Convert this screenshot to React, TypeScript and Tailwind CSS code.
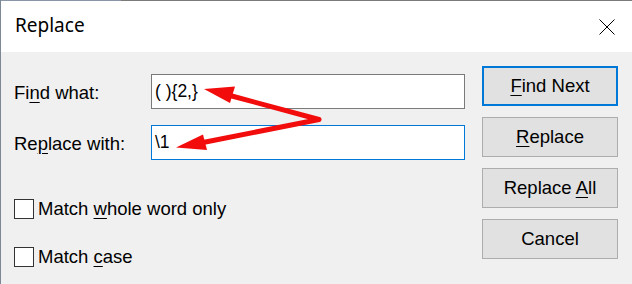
export default function App() {
  return (
    <div className="relative w-[632px] h-[284px] overflow-hidden bg-[#f0f0f0] font-['Liberation_Sans',Arial,sans-serif] text-black">
      <div className="flex h-full flex-col border-l border-[#7d8896]">
        <div className="flex h-px">
          <div className="w-[120px] bg-[#8a97a8]" />
          <div className="flex-1 bg-[#7a7a7a]" />
        </div>
        <div className="flex h-[51px] items-center justify-between bg-white pl-[14px] pr-[17px]">
          <span className="font-['Noto_Sans',sans-serif] text-[19px] leading-none text-black pb-[2px]">Replace</span>
          <svg width="16" height="16" viewBox="0 0 16 16" className="mt-[1px]">
            <path d="M0.5 0.5 L15.5 15.5 M15.5 0.5 L0.5 15.5" stroke="#000" strokeWidth="1" fill="none" />
          </svg>
        </div>
        <div className="flex flex-1">
          <div className="flex flex-1 flex-col pl-[13px] pt-[22px] text-[18.5px]">
            <div className="flex h-[35px] items-center">
              <span className="w-[137px] pt-[2px]">
                Fi<u className="underline-offset-[3px] decoration-1">n</u>d what:
              </span>
              <div className="flex h-[35px] w-[314px] items-center border border-[#7a7a7a] bg-white pl-[3px] text-[17.5px]">
                ( ){"{"}2,{"}"}
              </div>
            </div>
            <div className="mt-[16px] flex h-[35px] items-center">
              <span className="w-[137px] pt-[2px]">
                Re<u className="underline-offset-[3px] decoration-1">p</u>lace with:
              </span>
              <div className="flex h-[35px] w-[314px] items-center border border-[#0078d7] bg-white pl-[3px] text-[17.5px]">
                \1
              </div>
            </div>
            <div className="mt-[39px] flex h-[20px] items-center gap-[4px]">
              <div className="h-[20px] w-[20px] border border-[#333] bg-white" />
              <span>
                Match <u className="underline-offset-[3px] decoration-1">w</u>hole word only
              </span>
            </div>
            <div className="mt-[28px] flex h-[20px] items-center gap-[4px]">
              <div className="h-[20px] w-[20px] border border-[#333] bg-white" />
              <span>
                Match <u className="underline-offset-[3px] decoration-1">c</u>ase
              </span>
            </div>
          </div>
          <div className="mr-[14px] flex w-[136px] flex-col gap-[11px] pt-[14px] text-[18.5px]">
            <div className="flex h-[40px] items-center justify-center border-2 border-[#0078d7] bg-[#e1e1e1]">
              <span>
                <u className="underline-offset-[3px] decoration-1">F</u>ind Next
              </span>
            </div>
            <div className="flex h-[40px] items-center justify-center border border-[#adadad] bg-[#e1e1e1]">
              <span>
                <u className="underline-offset-[3px] decoration-1">R</u>eplace
              </span>
            </div>
            <div className="flex h-[40px] items-center justify-center border border-[#adadad] bg-[#e1e1e1]">
              <span>
                Replace <u className="underline-offset-[3px] decoration-1">A</u>ll
              </span>
            </div>
            <div className="flex h-[40px] items-center justify-center border border-[#adadad] bg-[#e1e1e1]">
              <span>Cancel</span>
            </div>
          </div>
        </div>
      </div>
      <svg className="pointer-events-none absolute left-0 top-0" width="632" height="284" viewBox="0 0 632 284">
        <polyline
          points="230,95.5 319,119.5 203,142.5"
          fill="none"
          stroke="#f20c0c"
          strokeWidth="5"
          strokeLinejoin="round"
          strokeLinecap="round"
        />
        <polygon points="204,89 235,86.5 230,103" fill="#f20c0c" />
        <polygon points="176,147.5 203,134.5 207,150" fill="#f20c0c" />
      </svg>
    </div>
  );
}
